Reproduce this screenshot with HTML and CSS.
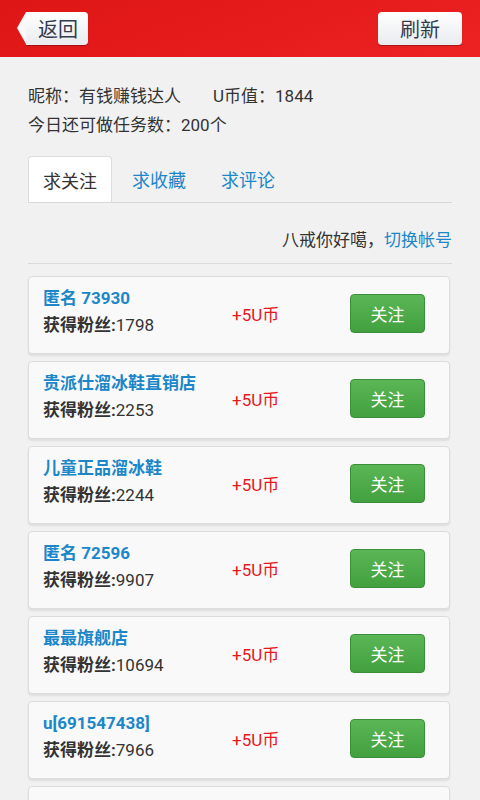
FILE: index.html
```html
<!DOCTYPE html>
<html lang="zh">
<head>
  <meta charset="UTF-8"/>
  <meta name="viewport" content="width=device-width, initial-scale=1.0"/>
  <title>求关注</title>
  <link rel="stylesheet" href="styles.css">
</head>
<body>
  <header class="topbar">
    <a class="btn-back">返回</a>
    <a class="btn-refresh">刷新</a>
  </header>

  <main class="content">
    <div class="info">
      <div><span class="nick">昵称：有钱赚钱达人</span><span>U币值：1844</span></div>
      <div>今日还可做任务数：200个</div>
    </div>

    <ul class="tabs">
      <li class="active">求关注</li>
      <li>求收藏</li>
      <li>求评论</li>
    </ul>

    <div class="greet">八戒你好噶，<a>切换帐号</a></div>

    <ul class="tasks">
      <li class="task">
        <div class="who"><div class="name">匿名 73930</div><div class="fans"><b>获得粉丝:</b>1798</div></div>
        <div class="reward">+5U币</div>
        <a class="follow">关注</a>
      </li>
      <li class="task">
        <div class="who"><div class="name">贵派仕溜冰鞋直销店</div><div class="fans"><b>获得粉丝:</b>2253</div></div>
        <div class="reward">+5U币</div>
        <a class="follow">关注</a>
      </li>
      <li class="task">
        <div class="who"><div class="name">儿童正品溜冰鞋</div><div class="fans"><b>获得粉丝:</b>2244</div></div>
        <div class="reward">+5U币</div>
        <a class="follow">关注</a>
      </li>
      <li class="task">
        <div class="who"><div class="name">匿名 72596</div><div class="fans"><b>获得粉丝:</b>9907</div></div>
        <div class="reward">+5U币</div>
        <a class="follow">关注</a>
      </li>
      <li class="task">
        <div class="who"><div class="name">最最旗舰店</div><div class="fans"><b>获得粉丝:</b>10694</div></div>
        <div class="reward">+5U币</div>
        <a class="follow">关注</a>
      </li>
      <li class="task">
        <div class="who"><div class="name">u[691547438]</div><div class="fans"><b>获得粉丝:</b>7966</div></div>
        <div class="reward">+5U币</div>
        <a class="follow">关注</a>
      </li>
      <li class="task"></li>
    </ul>
  </main>
</body>
</html>
```

FILE: styles.css
```css
body { margin:0; background:#f1f1f1; color:#333; font-family:"Roboto","Noto Sans CJK SC",sans-serif; overflow:hidden; }
ul { list-style:none; margin:0; padding:0; }
a { cursor:pointer; }

.topbar { height:57px; display:flex; align-items:center; justify-content:space-between; padding:0 18px 0 17px; box-sizing:border-box;
  background:linear-gradient(160deg,#de1616 0%,#e51b1b 50%,#ec2323 100%); }
.btn-back, .btn-refresh { height:33px; display:flex; align-items:center; justify-content:center; font-size:20px; color:#333b4d;
  background:linear-gradient(#ffffff,#e9ebee); border-radius:4px; box-shadow:0 1px 1px rgba(0,0,0,0.3); }
.btn-back { width:62px; margin-left:9px; position:relative; border-radius:0 4px 4px 0; padding-left:2px; box-sizing:border-box; }
.btn-back::before { content:""; position:absolute; left:-9px; top:0; width:0; height:0;
  border-top:16.5px solid transparent; border-bottom:16.5px solid transparent; border-right:9px solid #f8f8f9; }
.btn-refresh { width:84px; }

.content { padding:0 28px; }
.info { padding-top:25px; font-size:17px; line-height:29px; color:#333; }
.nick { margin-right:32px; }

.tabs { display:flex; margin-top:16px; border-bottom:1px solid #d8d8d8; }
.tabs li { width:84px; height:46px; margin-right:5px; display:flex; align-items:center; justify-content:center; font-size:18px; color:#1b87c9; box-sizing:border-box; }
.tabs li.active { color:#333; background:#fff; border:1px solid #dcdcdc; border-bottom:none; border-radius:4px 4px 0 0; }

.greet { text-align:right; font-size:17px; line-height:24px; padding:25px 0 11px; border-bottom:1px solid #dadada; color:#333; }
.greet a { color:#1b87c9; }

.tasks { margin-top:12px; margin-right:2px; }
.task { height:78px; margin-bottom:7px; display:flex; align-items:center; padding:0 24px 3px 14px; box-sizing:border-box;
  background:#f9f9f9; border:1px solid #dcdcdc; border-radius:4px; box-shadow:0 2px 2px rgba(0,0,0,0.08); }
.who { width:189px; font-size:17px; line-height:27px; align-self:flex-start; padding-top:8px; }
.name { color:#1b87c9; font-weight:bold; }
.fans { color:#333; }
.fans b { font-weight:bold; }
.reward { flex:1; color:#e8161b; font-size:17px; }
.follow { width:75px; height:39px; display:flex; align-items:center; justify-content:center; color:#fff; font-size:17px;
  background:linear-gradient(#5bb756,#43a03f); border:1px solid #3c8f39; border-radius:4px; box-sizing:border-box; }
```
